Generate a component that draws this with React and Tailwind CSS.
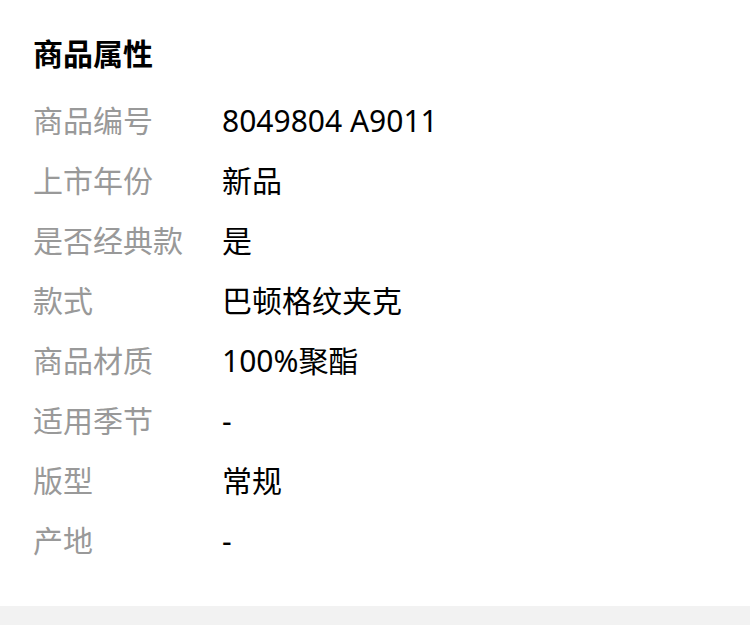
import React from 'react';

const rows = [
  ['商品编号', '8049804 A9011'],
  ['上市年份', '新品'],
  ['是否经典款', '是'],
  ['款式', '巴顿格纹夹克'],
  ['商品材质', '100%聚酯'],
  ['适用季节', '-'],
  ['版型', '常规'],
  ['产地', '-'],
];

export default function App() {
  return (
    <div className="w-[750px] h-[625px] bg-[#f2f2f2] flex flex-col font-['Noto_Sans','Noto_Sans_CJK_SC',sans-serif]">
      <div className="bg-white h-[606px] px-[33px] pt-[34px]">
        <h2 className="text-[30px] leading-[40px] font-bold text-black">商品属性</h2>
        <div className="mt-[16px] flex flex-col">
          {rows.map(([label, value]) => (
            <div key={label} className="flex h-[60px] items-center text-[30px]">
              <div className="w-[189px] text-[#999999]">{label}</div>
              <div className="text-black">{value}</div>
            </div>
          ))}
        </div>
      </div>
    </div>
  );
}
